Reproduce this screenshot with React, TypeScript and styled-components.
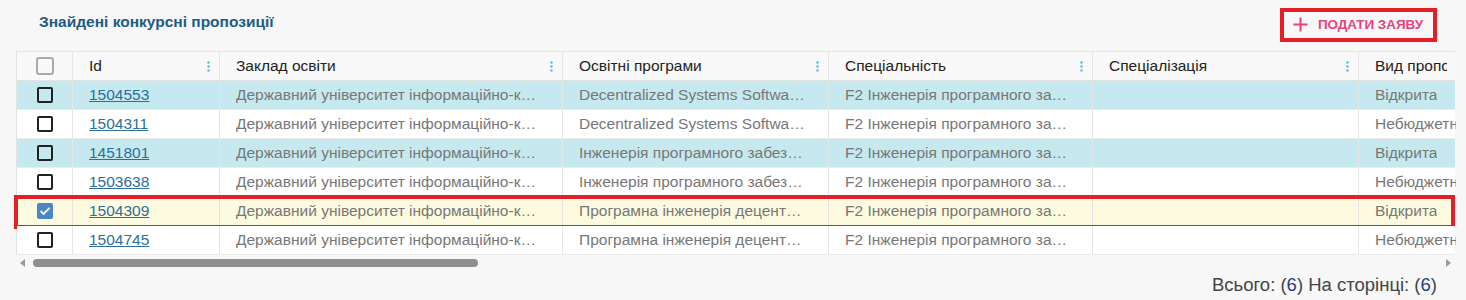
import React from "react";
import styled, { createGlobalStyle, css } from "styled-components";

const GlobalStyle = createGlobalStyle`
  html, body {
    margin: 0;
    padding: 0;
    background: #f7f7f7;
    font-family: "Liberation Sans", Arial, sans-serif;
  }
`;

type Row = {
  id: string;
  school: string;
  program: string;
  specialty: string;
  specialization: string;
  kind: string;
  tone: "cyan" | "white" | "selected";
};

const SCHOOL = "Державний університет інформаційно-комунікаційних технологій";
const SPEC = "F2 Інженерія програмного забезпечення";

const rows: Row[] = [
  { id: "1504553", school: SCHOOL, program: "Decentralized Systems Software Engineering", specialty: SPEC, specialization: "", kind: "Відкрита", tone: "cyan" },
  { id: "1504311", school: SCHOOL, program: "Decentralized Systems Software Engineering", specialty: SPEC, specialization: "", kind: "Небюджетна", tone: "white" },
  { id: "1451801", school: SCHOOL, program: "Інженерія програмного забезпечення", specialty: SPEC, specialization: "", kind: "Відкрита", tone: "cyan" },
  { id: "1503638", school: SCHOOL, program: "Інженерія програмного забезпечення", specialty: SPEC, specialization: "", kind: "Небюджетна", tone: "white" },
  { id: "1504309", school: SCHOOL, program: "Програмна інженерія децентралізованих систем", specialty: SPEC, specialization: "", kind: "Відкрита", tone: "selected" },
  { id: "1504745", school: SCHOOL, program: "Програмна інженерія децентралізованих систем", specialty: SPEC, specialization: "", kind: "Небюджетна", tone: "white" },
];

const columns = ["Id", "Заклад освіти", "Освітні програми", "Спеціальність", "Спеціалізація", "Вид пропозиції"];

const GRID = "56px 147px 343px 266px 264px 266px 97px";

const Page = styled.div`
  padding: 0 29px 0 16px;
`;

const TopBar = styled.div`
  height: 51px;
  display: flex;
  align-items: center;
  justify-content: space-between;
`;

const Title = styled.h2`
  margin: 0 0 7px 23px;
  font-size: 15.5px;
  font-weight: bold;
  color: #1d5c84;
`;

const AddButton = styled.button`
  display: flex;
  align-items: center;
  gap: 10px;
  height: 34px;
  margin-bottom: 2px;
  padding: 0 10px 0 9px;
  background: transparent;
  border: 4px solid #e3202a;
  color: #e5457c;
  font-family: "Liberation Sans", Arial, sans-serif;
  font-size: 13.4px;
  font-weight: bold;
  text-transform: uppercase;
  cursor: pointer;
`;

const Table = styled.div`
  width: 1439px;
  border-left: 1px solid #e3e3e3;
  border-top: 1px solid #e3e3e3;
  box-sizing: border-box;
`;

const HeadRow = styled.div`
  display: grid;
  grid-template-columns: ${GRID};
  height: 28px;
  background: #f9f9f9;
  border-bottom: 1px solid #e3e3e3;
`;

const toneBg = {
  cyan: "#c6e9ef",
  white: "#ffffff",
  selected: "#fdfbdf",
};

const BodyRow = styled.div<{ $tone: Row["tone"] }>`
  position: relative;
  display: grid;
  grid-template-columns: ${GRID};
  height: 29px;
  background: ${(p) => toneBg[p.$tone]};
  border-bottom: 1px solid #ececec;
  box-sizing: border-box;
  ${(p) =>
    p.$tone === "selected" &&
    css`
      &::after {
        content: "";
        position: absolute;
        top: -2px;
        bottom: -4px;
        left: -3px;
        right: 0;
        border: 4px solid #e3202a;
        pointer-events: none;
      }
    `}
`;

const Cell = styled.div<{ $last?: boolean }>`
  display: flex;
  align-items: center;
  padding: 0 ${(p) => (p.$last ? "0" : "20px")} 0 16px;
  border-right: ${(p) => (p.$last ? "none" : "1px solid #e6e6e6")};
  min-width: 0;
  overflow: hidden;
  font-size: 15.5px;
  color: #777;
  white-space: nowrap;
`;

const Clip = styled.span<{ $cut?: boolean }>`
  display: block;
  min-width: 0;
  overflow: hidden;
  text-overflow: ${(p) => (p.$cut ? "clip" : "ellipsis")};
  white-space: nowrap;
`;

const HeadCell = styled(Cell)`
  justify-content: space-between;
  gap: 6px;
  color: #222;
  padding-right: 9px;
`;

const BoxCell = styled(Cell)`
  justify-content: center;
  padding: 0;
`;

const IdLink = styled.a`
  color: #2b6f99;
  text-decoration: underline;
  font-size: 15.5px;
`;

const Check = styled.span<{ $checked?: boolean; $head?: boolean }>`
  display: inline-flex;
  align-items: center;
  justify-content: center;
  box-sizing: border-box;
  width: ${(p) => (p.$head ? "18px" : "16px")};
  height: ${(p) => (p.$head ? "18px" : "16px")};
  border-radius: ${(p) => (p.$head ? "3px" : "2px")};
  border: 2px solid ${(p) => (p.$checked ? "#4a87c3" : p.$head ? "#a9a9a9" : "#222")};
  background: ${(p) => (p.$checked ? "#4a87c3" : "transparent")};
`;

const ScrollTrack = styled.div`
  width: 1439px;
  height: 16px;
  display: flex;
  align-items: center;
  padding: 0 4px 0 4px;
  box-sizing: border-box;
  gap: 7px;
`;

const Thumb = styled.div`
  width: 445px;
  height: 8px;
  border-radius: 4px;
  background: #8e8e8e;
`;

const Spacer = styled.div`
  flex: 1;
`;

const Footer = styled.div`
  display: flex;
  justify-content: flex-end;
  padding-top: 3px;
  font-size: 18.5px;
  color: #444;
`;

const Num = styled.span`
  color: #233f8e;
`;

const MenuDots = () => (
  <svg width="3" height="11" viewBox="0 0 3 11" style={{ flexShrink: 0 }}>
    <circle cx="1.5" cy="1.5" r="1.2" fill="#5db8dc" />
    <circle cx="1.5" cy="5.5" r="1.2" fill="#5db8dc" />
    <circle cx="1.5" cy="9.5" r="1.2" fill="#5db8dc" />
  </svg>
);

const Arrow = ({ dir }: { dir: "left" | "right" }) => (
  <svg width="6" height="8" viewBox="0 0 6 8">
    <path d={dir === "left" ? "M5 0 L0 4 L5 8 Z" : "M1 0 L6 4 L1 8 Z"} fill="#9a9a9a" />
  </svg>
);

const Tick = () => (
  <svg width="12" height="10" viewBox="0 0 12 10">
    <path d="M1.5 5 L4.5 8 L10.5 1.8" fill="none" stroke="#fff" strokeWidth="1.8" />
  </svg>
);

const Plus = () => (
  <svg width="15" height="15" viewBox="0 0 15 15">
    <path d="M7.5 0.5 V14.5 M0.5 7.5 H14.5" stroke="#e5457c" strokeWidth="2" />
  </svg>
);

export default function App() {
  return (
    <Page>
      <GlobalStyle />
      <TopBar>
        <Title>Знайдені конкурсні пропозиції</Title>
        <AddButton>
          <Plus />
          Подати заяву
        </AddButton>
      </TopBar>

      <Table>
        <HeadRow>
          <BoxCell>
            <Check $head />
          </BoxCell>
          {columns.map((c, i) => (
            <HeadCell key={c} $last={i === columns.length - 1}>
              <Clip $cut>{c}</Clip>
              {i < columns.length - 1 && <MenuDots />}
            </HeadCell>
          ))}
        </HeadRow>
        {rows.map((r) => (
          <BodyRow key={r.id} $tone={r.tone}>
            <BoxCell>
              <Check $checked={r.tone === "selected"}>{r.tone === "selected" && <Tick />}</Check>
            </BoxCell>
            <Cell>
              <IdLink href="#">{r.id}</IdLink>
            </Cell>
            <Cell>
              <Clip>{r.school}</Clip>
            </Cell>
            <Cell>
              <Clip>{r.program}</Clip>
            </Cell>
            <Cell>
              <Clip>{r.specialty}</Clip>
            </Cell>
            <Cell>
              <Clip>{r.specialization}</Clip>
            </Cell>
            <Cell $last>
              <Clip $cut>{r.kind}</Clip>
            </Cell>
          </BodyRow>
        ))}
      </Table>

      <ScrollTrack>
        <Arrow dir="left" />
        <Thumb />
        <Spacer />
        <Arrow dir="right" />
      </ScrollTrack>

      <Footer>
        Всього: (<Num>6</Num>) На сторінці: (<Num>6</Num>)
      </Footer>
    </Page>
  );
}
